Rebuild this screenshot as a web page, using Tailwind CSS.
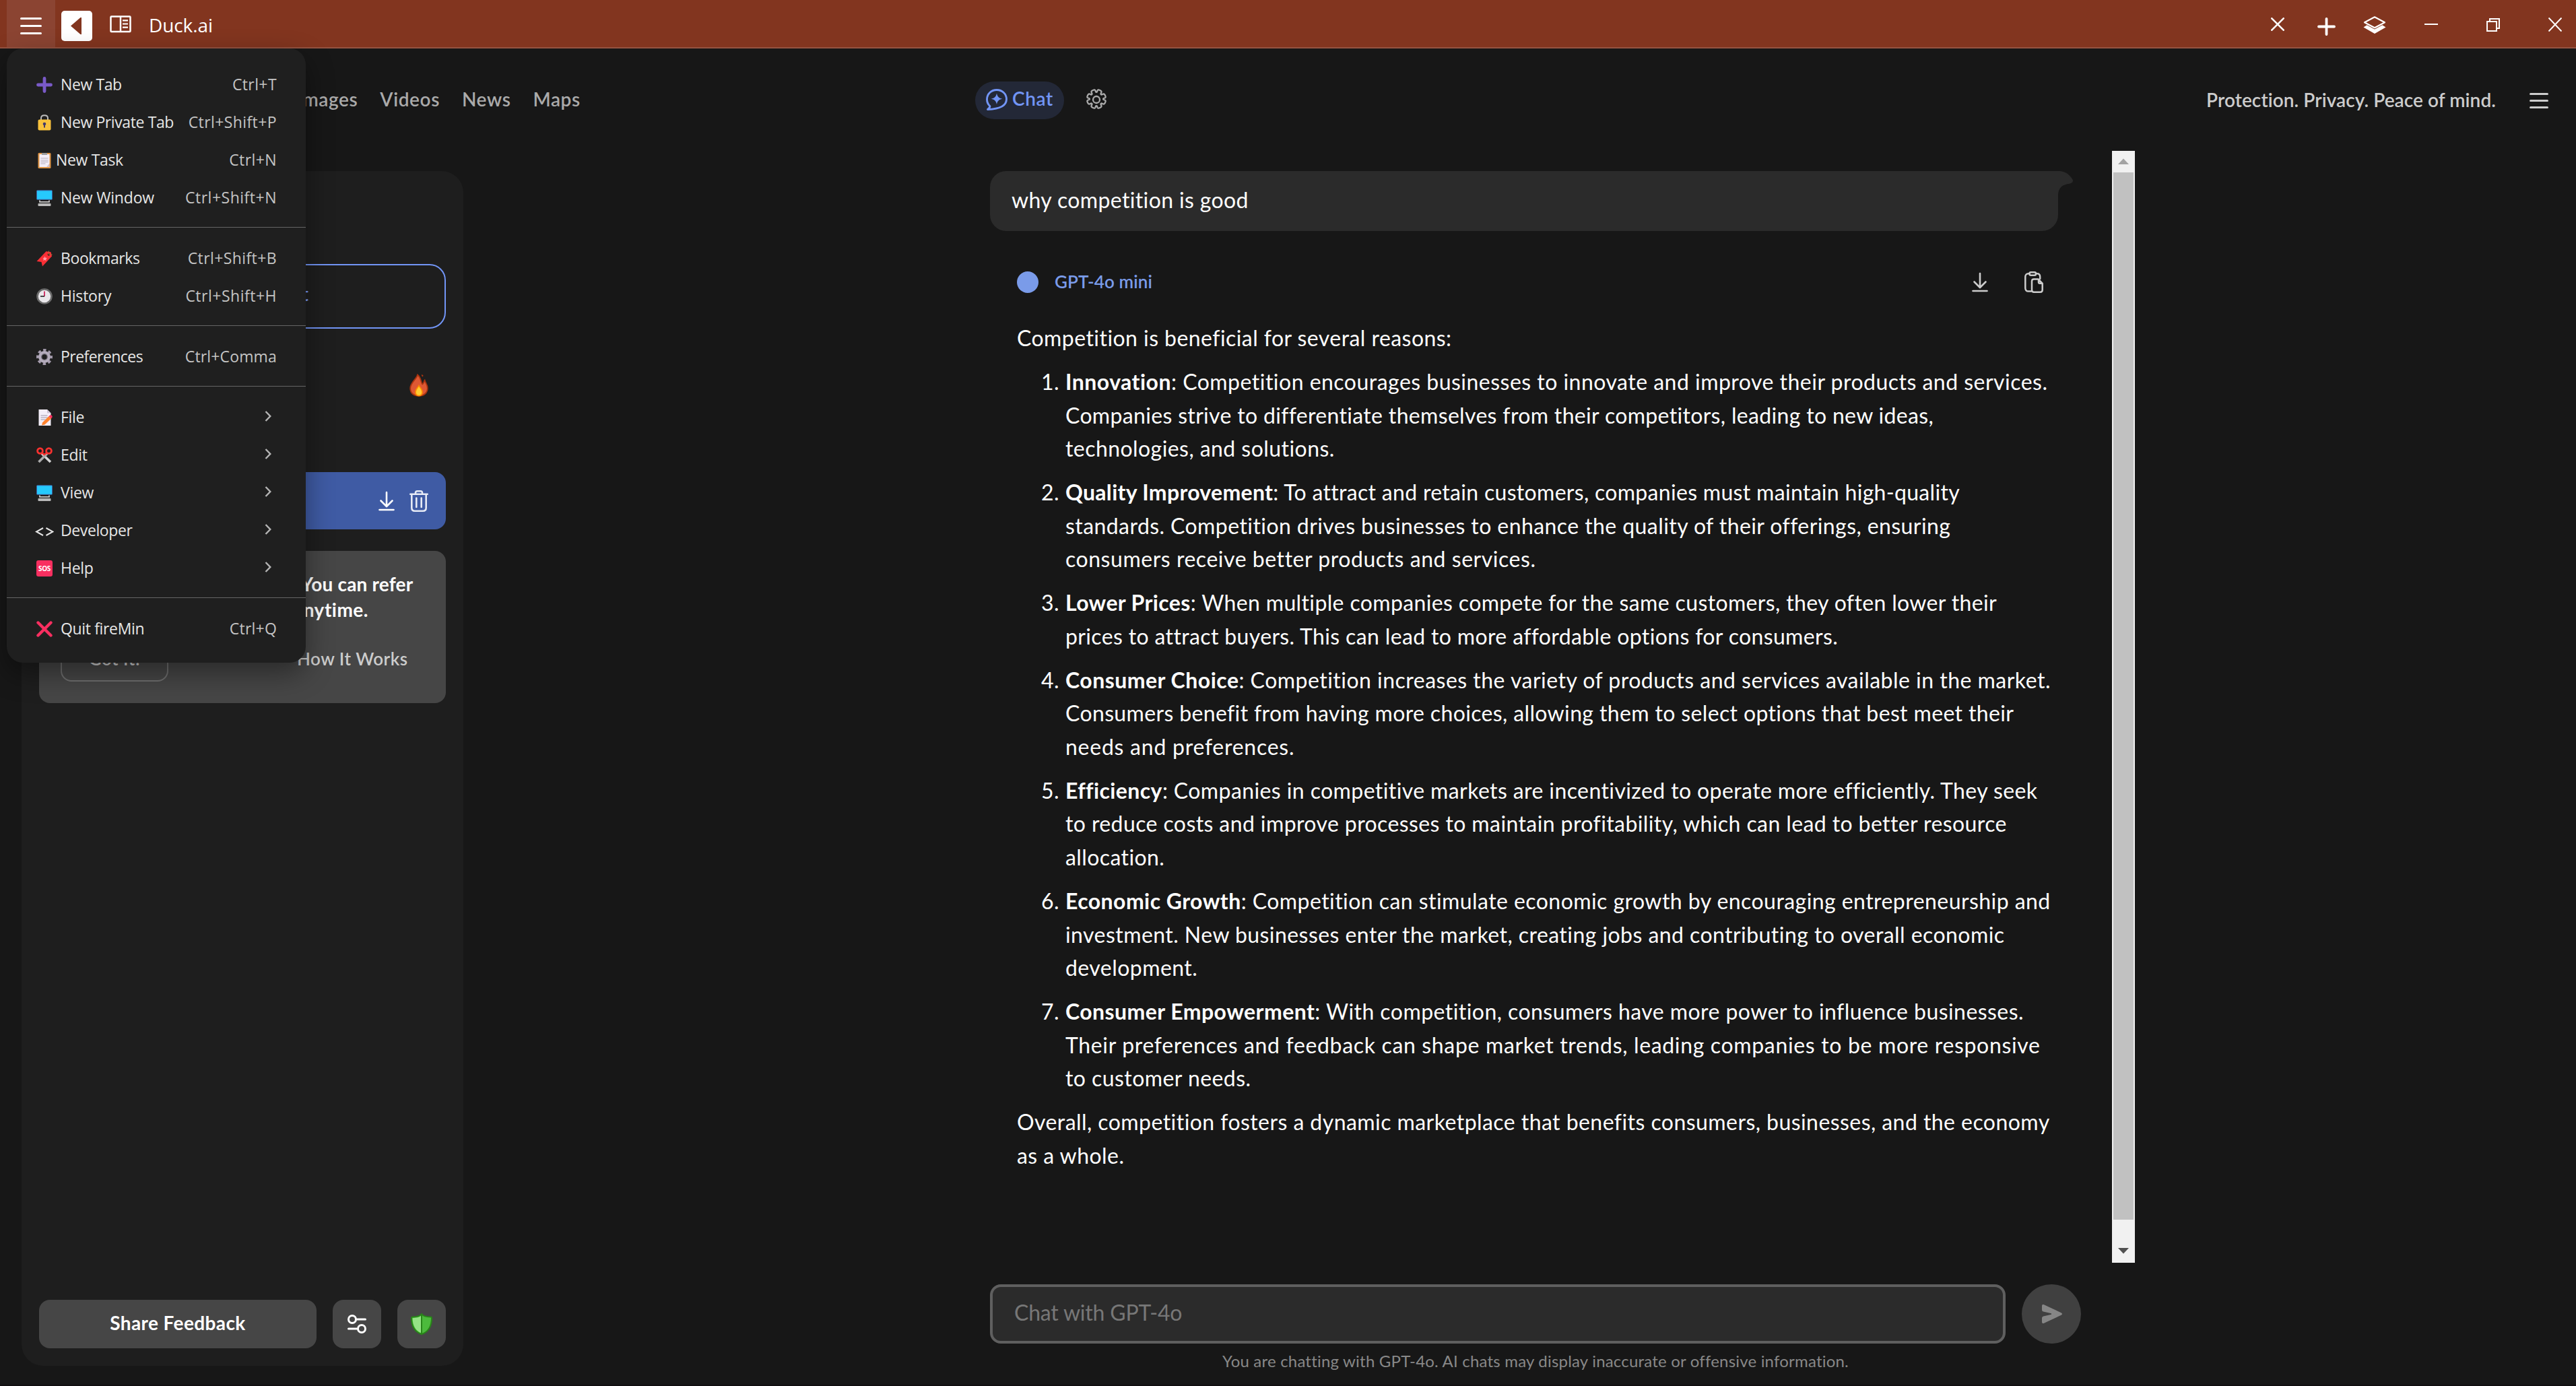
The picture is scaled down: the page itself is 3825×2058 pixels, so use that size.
<!DOCTYPE html>
<html lang="en">
<head>
<meta charset="utf-8">
<title>Duck.ai</title>
<script src="https://cdn.jsdelivr.net/npm/@tailwindcss/browser@4"></script>
</head>
<body class="relative flex h-[2058px] w-[3825px] flex-col overflow-hidden bg-[#171717] font-['Lato','Liberation_Sans',sans-serif] text-white">

<!-- Title bar -->
<header class="flex h-[72px] shrink-0 items-start border-b-2 border-[#955240] bg-[#82351f]">
  <div class="ml-[10px] h-[70px] w-[72px] bg-[#8b4432]">
    <svg class="h-[70px] w-[72px]" viewBox="0 0 72 70" stroke="#fff" stroke-width="3" stroke-linecap="round"><path d="M21.5 27.5h29M21.5 38.5h29M21.5 49.5h29"/></svg>
  </div>
  <svg class="mt-4 ml-[9px] h-[45px] w-[46px]" viewBox="0 0 46 45"><rect width="46" height="45" rx="5" fill="#fff"/><path d="M14 22.5L28.5 10H30v25h-1.500z" fill="#82351f"/></svg>
  <svg class="mt-[23px] ml-[26px] h-[26px] w-8" viewBox="0 0 32 26" fill="none" stroke="#fff"><rect x="1.500" y="1.500" width="29" height="22.500" rx="1" stroke-width="2.500"/><path d="M16 1v23" stroke-width="2.500"/><path d="M19 7.300h8M19 12.500h8M19 17.700h8" stroke-width="2.200"/></svg>
  <div class="mt-[17px] ml-[26px] font-['Open_Sans',sans-serif] text-[28px] leading-[40px] tracking-[-0.1px]">Duck.ai</div>
  <div class="grow"></div>
  <svg class="mt-[26px] h-5 w-5" viewBox="0 0 20 20" stroke="#fff" stroke-width="2.600" stroke-linecap="round"><path d="M1.300 1.300l17.400 17.400M18.700 1.300L1.300 18.700"/></svg>
  <svg class="mt-[26px] ml-[49px] h-[27px] w-[27px]" viewBox="0 0 27 27" stroke="#fff" stroke-width="3.800" stroke-linecap="round"><path d="M2 13.500h23M13.500 2v23"/></svg>
  <svg class="mt-6 ml-[41px] h-[26px] w-[34px]" viewBox="0 0 34 26"><path d="M17 1.300L32 9.200 17 17.200 2 9.200z" fill="none" stroke="#fff" stroke-width="2.200" stroke-linejoin="round"/><path d="M17 19.500l11.500-6.200L33.500 16.500 17 26 .5 16.500l5-3.200z" fill="#fff"/></svg>
  <svg class="mt-[26px] ml-[57px] h-5 w-5" viewBox="0 0 20 20" fill="#fff"><rect y="9" width="20" height="2"/></svg>
  <svg class="mt-[27px] ml-[72px] h-5 w-5" viewBox="0 0 20 20" fill="none" stroke="#fff" stroke-width="2"><path d="M1 5h14v14H1zM5 5V1h14v14h-4"/></svg>
  <svg class="mt-[26px] mr-[21px] ml-[72px] h-[21px] w-5" viewBox="0 0 20 21" stroke="#fff" stroke-width="2"><path d="M.5 .5l19 20M19.500 .5l-19 20"/></svg>
</header>

<!-- Site navigation -->
<nav class="flex h-[152px] shrink-0 items-start text-[28px] leading-[34px] font-semibold">
  <div class="flex w-[1448px] gap-[33px] pt-[58px] pl-[441px] tracking-[0.6px] text-[#aaa]">
    <span>Images</span><span>Videos</span><span>News</span><span>Maps</span>
  </div>
  <div class="mt-[49px] flex h-14 w-[132px] items-center gap-[7px] rounded-full bg-[#232837] pl-4 text-[#7295f6]">
    <svg class="-mt-[2px] h-8 w-8" viewBox="0 0 32 32"><path d="M16 1.500c8.200 0 14.500 6 14.500 13.700 0 9.600-9.500 14.600-28 15.300 2.600-1.800 3.600-3.300 3.400-5C3 22.800 1.500 19.500 1.500 15.400 1.500 7.500 7.800 1.500 16 1.500z" fill="none" stroke="#7295f6" stroke-width="2.900" stroke-linejoin="round"/><path d="M16 6.500c1 5 3 7 8.300 8.300C19 16 17 18 16 23c-1-5-3-7-8.300-8.200C13 13.500 15 11.500 16 6.500z" fill="#7295f6"/></svg>
    <span class="-mt-[6px] tracking-[0.6px]">Chat</span>
  </div>
  <svg class="mt-[60px] ml-8 h-8 w-8" viewBox="0 0 32 32" fill="none" stroke="#aaa" stroke-width="2.300" stroke-linejoin="round"><circle cx="16" cy="16" r="5"/><path d="M11.500 1.700c1.300-.7 2.500-.3 3 1l.5 1.500c.4.9 1.600.9 2 0l.5-1.500c.5-1.300 1.700-1.700 3-1l1.700.8c1.300.7 1.600 1.800 1 3.100l-.6 1.300c-.4 1 .5 1.900 1.500 1.500l1.300-.6c1.300-.6 2.400-.3 3.100 1l.8 1.700c.7 1.300.3 2.500-1 3l-1.500.5c-.9.4-.9 1.600 0 2l1.500.5c1.300.5 1.700 1.700 1 3l-.8 1.700c-.7 1.300-1.800 1.600-3.100 1l-1.300-.6c-1-.4-1.900.5-1.500 1.500l.6 1.300c.6 1.300.3 2.400-1 3.100l-1.700.8c-1.300.7-2.500.3-3-1l-.5-1.500c-.4-.9-1.600-.9-2 0l-.5 1.500c-.5 1.300-1.700 1.700-3 1l-1.700-.8c-1.300-.7-1.600-1.800-1-3.100l.6-1.300c.4-1-.5-1.900-1.500-1.500l-1.300.6c-1.300.6-2.400.3-3.100-1l-.8-1.700c-.7-1.300-.3-2.500 1-3l1.500-.5c.9-.4.9-1.600 0-2l-1.500-.5c-1.300-.5-1.700-1.700-1-3l.8-1.700c.7-1.300 1.800-1.600 3.100-1l1.300.6c1 .4 1.900-.5 1.500-1.500l-.6-1.300c-.6-1.300-.3-2.400 1-3.100z"/></svg>
  <div class="grow"></div>
  <div class="mt-[59px] tracking-[0.08px] text-[#ccc]">Protection. Privacy. Peace of mind.</div>
  <svg class="mt-[66px] mr-[41px] ml-[50px] h-6 w-7" viewBox="0 0 28 24" stroke="#ccc" stroke-width="3" stroke-linecap="round"><path d="M1.500 1.500h25M1.500 11.500h25M1.500 21.500h25"/></svg>
</nav>

<div class="flex grow items-start">
  <!-- Sidebar -->
  <aside class="mt-[30px] ml-8 flex h-[1774px] w-[656px] flex-col rounded-[32px] bg-[#1e1e1e] px-[26px]">
    <div class="mt-[138px] flex h-24 items-center justify-end rounded-3xl border-2 border-[#7295f6] pr-[202px] pb-2 text-[28px] font-semibold text-[#7295f6]">New Chat</div>
    <div class="mt-[67px] flex h-[34px] justify-end pr-[26px]">
      <svg class="h-[34px] w-7" viewBox="0 0 28 34"><path d="M12 1.500C10.500 8 1.200 13 1.200 21.500c0 7.500 5.400 11.300 12.800 11.300s12.800-4.300 12.800-11.600c0-5-3.300-8-4.200-11.700-1.200 1.500-1 4.500-3.400 6C16.500 12 17.500 5.500 12 1.500z" fill="#de5833" stroke="#a8330f" stroke-width="1.800"/><path d="M18 1l2.500 1.200-.5 2.300-2-1.300z" fill="#a8330f"/><path d="M14 17.500c1.500 3 5 5.500 5 9.500 0 3.600-2.200 5.600-5 5.600S9 30.600 9 27c0-4 3.500-6.500 5-9.500z" fill="#ffcc33" stroke="#ff8a00" stroke-width="1.600"/></svg>
    </div>
    <div class="mt-[112px] flex h-[85px] items-start justify-end rounded-2xl bg-[#3f5ba4] pr-[26px]">
      <svg class="mt-7 mr-[22px] h-[30px] w-6" viewBox="0 0 24 30" fill="none" stroke="#fff" stroke-width="2.600" stroke-linecap="round" stroke-linejoin="round"><path d="M12 2v20.500M3.500 14.500l8.500 8.500 8.500-8.500M1.500 28h21"/></svg>
      <svg class="mt-[27px] h-8 w-7" viewBox="0 0 28 32" fill="none" stroke="#e6eaf5" stroke-width="2.600" stroke-linecap="round" stroke-linejoin="round"><path d="M1.300 5.800h25.400M9 5.500V3.800c0-1.500.9-2.500 2.500-2.500h5c1.600 0 2.500 1 2.500 2.500v1.700M3.300 6v20c0 3 1.700 4.700 4.700 4.700h12c3 0 4.700-1.700 4.700-4.700V6M10.300 11.500v13.500M17.700 11.500v13.500"/></svg>
    </div>
    <div class="relative mt-8 h-[226px] rounded-2xl bg-[#464646] pt-[31px]">
      <div class="text-[28px] leading-[37.500px] font-bold">
        <div class="pl-[389px] tracking-[0.2px]">You can refer</div>
        <div class="pl-[378px] tracking-[0.5px]">anytime.</div>
      </div>
      <div class="mt-5 ml-8 flex h-[68px] items-center text-[26px] font-semibold tracking-[0.500px] text-[#ccc]">
        <div class="flex h-[68px] w-40 items-center justify-center rounded-2xl border-2 border-[#6f6f6f]">Got It!</div>
        <div class="pl-[191px]">How It Works</div>
      </div>
    </div>
    <div class="mt-auto mb-[26px] flex gap-6">
      <div class="flex h-[72px] w-[412px] items-center justify-center rounded-2xl bg-[#464646] pb-1 text-[28px] font-bold tracking-[0.4px]">Share Feedback</div>
      <div class="flex h-[72px] w-[72px] items-center justify-center rounded-2xl bg-[#464646]">
        <svg class="h-[30px] w-[30px]" viewBox="0 0 30 30" fill="none" stroke="#fff" stroke-width="3" stroke-linecap="round"><circle cx="8" cy="8" r="5.500"/><path d="M14 8h13.500M2.500 22H15"/><circle cx="22" cy="22" r="5.500"/></svg>
      </div>
      <div class="flex h-[72px] w-[72px] items-center justify-center rounded-2xl bg-[#464646]">
        <svg class="h-8 w-8" viewBox="0 0 32 32"><path d="M16 1c2.500 3.500 7 4.500 13.500 4.500 1 0 1.500.7 1.500 1.700C31 20 26 27.500 16 31.200 6 27.500 1 20 1 7.200c0-1 .5-1.700 1.500-1.700C9 5.500 13.500 4.500 16 1z" fill="#4cba3c" stroke="#288419" stroke-width="2"/><path d="M15.200 3.800C12.500 6 8.500 7 2.600 7.200 2.800 18.500 7 25.500 15.200 29.200z" fill="#96e386"/><path d="M16 2v28.500" stroke="#288419" stroke-width="2"/></svg>
      </div>
    </div>
  </aside>

  <!-- Conversation -->
  <main class="ml-[782px] w-[1700px]">
    <div class="flex h-[1651px]">
      <div class="w-[1666px] pt-[30px]">
        <div class="relative h-[89px] w-[1586px] rounded-3xl rounded-tr-none bg-[#2b2b2b] pt-[22px] pl-8 text-[32px] leading-[42px] tracking-[0.360px]">why competition is good
          <svg class="absolute top-0 left-full h-10 w-6" viewBox="0 0 24 40"><path d="M0 0c10 0 16 4 21.500 12.500 1.500 3-.5 5-3.500 6C6 20.500 0 24 0 38z" fill="#2b2b2b"/></svg>
        </div>
        <div class="mt-[59px] flex h-[34px] items-center pl-10 text-[#7a9be9]">
          <div class="h-8 w-8 rounded-full bg-[#7a9be9]"></div>
          <div class="-mt-[3px] ml-6 text-[26px] leading-8 font-semibold tracking-[0.1px]">GPT-4o mini</div>
          <svg class="ml-auto h-[30px] w-6" viewBox="0 0 24 30" fill="none" stroke="#ccc" stroke-width="2.600" stroke-linecap="round" stroke-linejoin="round"><path d="M12 2v20.500M3.500 14.500l8.500 8.500 8.500-8.500M1.500 28h21"/></svg>
          <svg class="mr-[102px] ml-[54px] h-8 w-7" viewBox="0 0 28 32" fill="none" stroke="#ccc" stroke-width="2.500" stroke-linejoin="round" stroke-linecap="round"><path d="M10 29.500H6c-3 0-4.700-1.700-4.700-4.700V8c0-3 1.700-4.700 4.700-4.700h1.500M17 3.300h1.500c3 0 4.700 1.700 4.700 4.700v3"/><rect x="7.500" y="1.300" width="9.500" height="4.500" rx="2"/><path d="M20.500 11.500H14c-2 0-3 1-3 3v13c0 2 1 3.200 3 3.200h9.500c2 0 3.200-1.200 3.200-3.200v-9.700zM21 12v4c0 1.200.6 1.800 1.800 1.800h3.700"/></svg>
        </div>
        <div class="mt-[41px] pl-10 text-[32px] leading-[49.350px] tracking-[0.440px] whitespace-nowrap">
          <p>Competition is beneficial for several reasons:</p>
          <ol class="mt-4 flex flex-col gap-4">
            <li class="flex"><span class="w-[63px] shrink-0 text-right">1.</span><div class="ml-[9px]"><span class="tracking-[0.480px]"><b>Innovation</b>: Competition encourages businesses to innovate and improve their products and services.</span><br><span class="tracking-[0.330px]">Companies strive to differentiate themselves from their competitors, leading to new ideas,</span><br>technologies, and solutions.</div></li>
            <li class="flex"><span class="w-[63px] shrink-0 text-right">2.</span><div class="ml-[9px]"><span class="tracking-[0.310px]"><b>Quality Improvement</b>: To attract and retain customers, companies must maintain high-quality</span><br><span class="tracking-[0.420px]">standards. Competition drives businesses to enhance the quality of their offerings, ensuring</span><br><span class="tracking-[0.540px]">consumers receive better products and services.</span></div></li>
            <li class="flex"><span class="w-[63px] shrink-0 text-right">3.</span><div class="ml-[9px] tracking-[0.360px]"><b>Lower Prices</b>: When multiple companies compete for the same customers, they often lower their<br>prices to attract buyers. This can lead to more affordable options for consumers.</div></li>
            <li class="flex"><span class="w-[63px] shrink-0 text-right">4.</span><div class="ml-[9px]"><span class="tracking-[0.480px]"><b>Consumer Choice</b>: Competition increases the variety of products and services available in the market.</span><br><span class="tracking-[0.360px]">Consumers benefit from having more choices, allowing them to select options that best meet their</span><br><span class="tracking-[0.750px]">needs and preferences.</span></div></li>
            <li class="flex"><span class="w-[63px] shrink-0 text-right">5.</span><div class="ml-[9px] tracking-[0.400px]">
              <b>Efficiency</b>: Companies in competitive markets are incentivized to operate more efficiently. They seek<br>to reduce costs and improve processes to maintain profitability, which can lead to better resource<br>allocation.</div></li>
            <li class="flex"><span class="w-[63px] shrink-0 text-right">6.</span><div class="ml-[9px]"><b>Economic Growth</b>: Competition can stimulate economic growth by encouraging entrepreneurship and<br>investment. New businesses enter the market, creating jobs and contributing to overall economic<br>development.</div></li>
            <li class="flex"><span class="w-[63px] shrink-0 text-right">7.</span><div class="ml-[9px]"><b>Consumer Empowerment</b>: With competition, consumers have more power to influence businesses.<br><span class="tracking-[0.660px]">Their preferences and feedback can shape market trends, leading companies to be more responsive</span><br>to customer needs.</div></li>
          </ol>
          <p class="mt-4">Overall, competition fosters a dynamic marketplace that benefits consumers, businesses, and the economy<br>as a whole.</p>
        </div>
      </div>
      <div class="flex h-[1651px] w-[34px] flex-col items-center bg-[#f1f1f1]">
        <svg class="h-8 w-[34px] shrink-0" viewBox="0 0 34 32"><path d="M9 20l8-8.500 8 8.500z" fill="#a3a3a3"/></svg>
        <div class="h-[1555px] w-[30px] bg-[#c1c1c1]"></div>
        <svg class="mt-auto h-8 w-[34px] shrink-0" viewBox="0 0 34 32"><path d="M9 10h16l-8 8.500z" fill="#505050"/></svg>
      </div>
    </div>
    <div class="mt-8 flex gap-6">
      <div class="h-[88px] w-[1508px] rounded-2xl border-4 border-[#5f5f5f] bg-[#2b2b2b] pt-[17px] pl-8 text-[32px] leading-[42px] tracking-[-0.2px] text-[#777]">Chat with GPT-4o</div>
      <div class="flex h-[88px] w-[88px] items-center justify-center rounded-full bg-[#404040]">
        <svg class="ml-[2px] h-7 w-[30px]" viewBox="0 0 30 28"><path d="M2.500 0L29 12.500q2 1.500 0 3L2.500 28Q0 28.500 0 26v-6q0-2 2-2.500L14 14.700v-1.400L2 10.500Q0 10 0 8V2Q0-.5 2.500 0z" fill="#868686"/></svg>
      </div>
    </div>
    <div class="mt-[10px] w-[1620px] text-center text-[24px] leading-8 tracking-[0.2px] text-[#888]">You are chatting with GPT-4o. AI chats may display inaccurate or offensive information.</div>
  </main>
</div>

<!-- Window bottom edge -->
<div class="absolute bottom-0 left-0 h-[2px] w-full bg-[#110e10]"></div>

<!-- Application menu -->
<div class="absolute top-[72px] left-[10px] h-[912px] w-[444px] rounded-3xl bg-[#1f1f1f] pt-[26px] font-['Open_Sans',sans-serif] text-[23px] leading-[54px] text-[#e6e6e6] shadow-[0_16px_40px_rgba(0,0,0,0.4)]">
  <div class="flex h-14 items-start pr-[43px] pl-11">
    <svg class="mt-4 h-6 w-6" viewBox="0 0 24 24" stroke="#7a5ac8" stroke-width="4.800" stroke-linecap="round"><path d="M2.500 12h19M12 2.500v19"/></svg>
    <span class="ml-3 tracking-[-0.4px]">New Tab</span><span class="ml-auto tracking-[0.4px] text-[#c4c4c4]">Ctrl+T</span>
  </div>
  <div class="flex h-14 items-start pr-[43px] pl-11">
    <svg class="mt-4 h-6 w-6" viewBox="0 0 24 24"><path d="M7 9V5.500C7 2.500 9 1.200 12 1.200s5 1.300 5 4.300V9" fill="none" stroke="#bdbdbd" stroke-width="2"/><rect x="2.500" y="7.500" width="19" height="16" rx="2" fill="#f9c23c"/><circle cx="12" cy="14" r="2.300" fill="#433b6b"/><path d="M11 14h2v5.500h-2z" fill="#433b6b"/></svg>
    <span class="ml-3 tracking-[-0.4px]">New Private Tab</span><span class="ml-auto tracking-[0.4px] text-[#c4c4c4]">Ctrl+Shift+P</span>
  </div>
  <div class="flex h-14 items-start pr-[43px] pl-11">
    <svg class="mt-4 h-6 w-6" viewBox="0 0 24 24"><rect x="2.500" y="1" width="19" height="23" rx="1.500" fill="#e19747"/><path d="M4.500 3h15v14l-4 5h-11z" fill="#f3eef8"/><path d="M19.500 17v5h-4z" fill="#cdc4d6"/><path d="M8 1h8v3H8z" fill="#9b9b9b"/><path d="M6.500 9h11M6.500 12h11M6.500 14.500h11M6.500 17h7" stroke="#b3acbc"/></svg>
    <span class="ml-[5px] tracking-[-0.350px]">New Task</span><span class="ml-auto tracking-[0.4px] text-[#c4c4c4]">Ctrl+N</span>
  </div>
  <div class="flex h-14 items-start pr-[43px] pl-11">
    <svg class="mt-4 h-6 w-6" viewBox="0 0 24 24"><rect x=".5" y=".8" width="23" height="13.500" rx=".8" fill="#26c9fc" stroke="#3f5fa0"/><path d="M5 15.500v2.300h14v-2.300" fill="none" stroke="#c9c9c9" stroke-width="1.800"/><rect x="2.500" y="20" width="19" height="4" rx="1" fill="#b9b9b9"/></svg>
    <span class="ml-3 tracking-[-0.2px]">New Window</span><span class="ml-auto tracking-[0.500px] text-[#c4c4c4]">Ctrl+Shift+N</span>
  </div>
  <div class="mt-[15px] mb-[18px] h-px bg-[#656565]"></div>
  <div class="flex h-14 items-start pr-[43px] pl-11">
    <svg class="mt-4 h-6 w-6" viewBox="0 0 24 24"><path d="M.5 16L14.500 1.200l7 1L23 8.500 9 23.500 7.500 17z" fill="#f92f35"/><path d="M12.500 8.500l1 2.300 2.500.2-1.700 1.800.4 2.500-2.200-1.200-2.300 1 .6-2.500L9.500 11l2.300-.3z" fill="#ff9aa8"/><circle cx="18.500" cy="6" r="1.800" fill="#3a1717"/><path d="M18.500 6h5M18.500 6V.5" stroke="#b0703c" fill="none"/></svg>
    <span class="ml-3 tracking-[-0.4px]">Bookmarks</span><span class="ml-auto tracking-[0.4px] text-[#c4c4c4]">Ctrl+Shift+B</span>
  </div>
  <div class="flex h-14 items-start pr-[43px] pl-11">
    <svg class="mt-4 h-6 w-6" viewBox="0 0 24 24"><circle cx="12" cy="12" r="10.500" fill="#e9e7ea" stroke="#6b6b6b" stroke-width="2.600"/><path d="M12 12V4.500" stroke="#ca0b4a" stroke-width="1.600"/><path d="M12 12H6" stroke="#222" stroke-width="1.600"/></svg>
    <span class="ml-3 tracking-[-0.2px]">History</span><span class="ml-auto tracking-[0.500px] text-[#c4c4c4]">Ctrl+Shift+H</span>
  </div>
  <div class="mt-[15px] mb-[18px] h-px bg-[#656565]"></div>
  <div class="flex h-14 items-start pr-[43px] pl-11">
    <svg class="mt-4 h-6 w-6" viewBox="0 0 24 24" fill="none"><circle cx="12" cy="12" r="10.200" stroke="#a49bac" stroke-width="3.600" stroke-dasharray="4.400 3.611" stroke-dashoffset="2.200"/><circle cx="12" cy="12" r="6.500" stroke="#b4acbc" stroke-width="5"/><circle cx="12" cy="12" r="4.300" stroke="#6d6872" stroke-width="1.200"/></svg>
    <span class="ml-3 tracking-[-0.550px]">Preferences</span><span class="ml-auto tracking-[0.150px] text-[#c4c4c4]">Ctrl+Comma</span>
  </div>
  <div class="mt-[15px] mb-[18px] h-px bg-[#656565]"></div>
  <div class="flex h-14 items-start pr-[51px] pl-11">
    <svg class="mt-4 h-6 w-6" viewBox="0 0 24 24"><path d="M3.500 0H16l5.500 5.500V24h-18z" fill="#f3eef8"/><path d="M16 0v5.500h5.500z" fill="#cdc4d6"/><path d="M6.500 9h10M6.500 12h10M6.500 15h7" stroke="#9b93a6"/><path d="M9 19.500L18.500 10l3.500 3.500-9.500 9L8 23.500z" fill="#ff822d"/><path d="M18.500 10l1.500-1.300c1-.8 2.200-.6 3 .3s1 2 .2 3L22 13.500z" fill="#f92f60"/></svg>
    <span class="ml-3 tracking-[-0.3px]">File</span>
    <svg class="mt-[18px] ml-auto h-4 w-[10px]" viewBox="0 0 10 16" fill="none" stroke="#b5b5b5" stroke-width="2.400"><path d="M1.500 1L8.300 8l-6.800 7"/></svg>
  </div>
  <div class="flex h-14 items-start pr-[51px] pl-11">
    <svg class="mt-4 h-6 w-6" viewBox="0 0 24 24" fill="none"><path d="M8 9.500l13 12.500" stroke="#d5d5d5" stroke-width="3.600"/><path d="M16 9.500L3.500 22" stroke="#ababab" stroke-width="3.600"/><circle cx="5.500" cy="5.500" r="3.900" stroke="#f8312f" stroke-width="2.800"/><circle cx="18.500" cy="5.500" r="3.900" stroke="#f8312f" stroke-width="2.800"/><path d="M8.500 8.500l3 2.500 4-2.500" stroke="#f8312f" stroke-width="2.600"/></svg>
    <span class="ml-3 tracking-[-0.3px]">Edit</span>
    <svg class="mt-[18px] ml-auto h-4 w-[10px]" viewBox="0 0 10 16" fill="none" stroke="#b5b5b5" stroke-width="2.400"><path d="M1.500 1L8.300 8l-6.800 7"/></svg>
  </div>
  <div class="flex h-14 items-start pr-[51px] pl-11">
    <svg class="mt-4 h-6 w-6" viewBox="0 0 24 24"><rect x=".5" y=".8" width="23" height="13.500" rx=".8" fill="#26c9fc" stroke="#3f5fa0"/><path d="M5 15.500v2.300h14v-2.300" fill="none" stroke="#c9c9c9" stroke-width="1.800"/><rect x="2.500" y="20" width="19" height="4" rx="1" fill="#b9b9b9"/></svg>
    <span class="ml-3 tracking-[-0.3px]">View</span>
    <svg class="mt-[18px] ml-auto h-4 w-[10px]" viewBox="0 0 10 16" fill="none" stroke="#b5b5b5" stroke-width="2.400"><path d="M1.500 1L8.300 8l-6.800 7"/></svg>
  </div>
  <div class="flex h-14 items-start pr-[51px] pl-[42px]">
    <svg class="mt-4 h-6 w-7" viewBox="0 0 28 24" fill="none" stroke="#e6e6e6" stroke-width="2"><path d="M12 8L2 13.500 12 19M16.500 8l10 5.500-10 5.500"/></svg>
    <span class="ml-[10px] tracking-[-0.4px]">Developer</span>
    <svg class="mt-[18px] ml-auto h-4 w-[10px]" viewBox="0 0 10 16" fill="none" stroke="#b5b5b5" stroke-width="2.400"><path d="M1.500 1L8.300 8l-6.800 7"/></svg>
  </div>
  <div class="flex h-14 items-start pr-[51px] pl-11">
    <div class="mt-4 flex h-6 w-6 items-center justify-center rounded-[3px] bg-[#f92f60] text-[10px] leading-none font-bold tracking-[-0.3px] text-white">SOS</div>
    <span class="ml-3 tracking-[-0.3px]">Help</span>
    <svg class="mt-[18px] ml-auto h-4 w-[10px]" viewBox="0 0 10 16" fill="none" stroke="#b5b5b5" stroke-width="2.400"><path d="M1.500 1L8.300 8l-6.800 7"/></svg>
  </div>
  <div class="mt-[15px] mb-[18px] h-px bg-[#656565]"></div>
  <div class="flex h-14 items-start pr-[43px] pl-11">
    <svg class="mt-4 h-6 w-6" viewBox="0 0 24 24" stroke="#f92f60" stroke-width="4.400" stroke-linecap="round"><path d="M2.500 2.500l19 19M21.500 2.500l-19 19"/></svg>
    <span class="ml-3 tracking-[-0.350px]">Quit fireMin</span><span class="ml-auto tracking-[0.2px] text-[#c4c4c4]">Ctrl+Q</span>
  </div>
</div>
</body>
</html>
